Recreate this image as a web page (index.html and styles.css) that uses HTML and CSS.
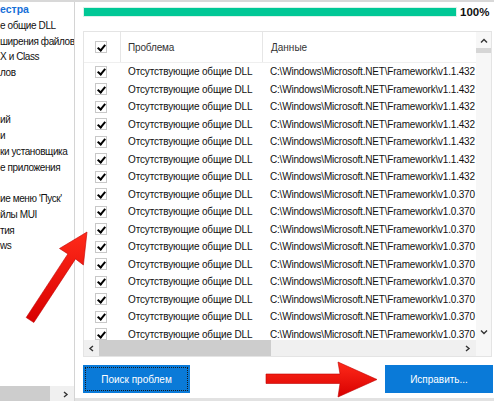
FILE: index.html
```html
<!DOCTYPE html>
<html>
<head>
<meta charset="utf-8">
<link rel="stylesheet" href="styles.css">
</head>
<body>
<div class="app">
  <aside class="side">
    <ul class="side-list">
      <li class="active">естра</li>
      <li>е общие DLL</li>
      <li>ширения файлов</li>
      <li>Х и Class</li>
      <li>лов</li>
      <li>&nbsp;</li>
      <li>&nbsp;</li>
      <li>ий</li>
      <li>и</li>
      <li>ки установщика</li>
      <li>е приложения</li>
      <li>&nbsp;</li>
      <li>ие меню 'Пуск'</li>
      <li>йлы MUI</li>
      <li>тия</li>
      <li>ws</li>
    </ul>
    <div class="side-hscroll">
      <div class="hthumb side-thumb"></div>
      <span class="arrow-cell side-right">
        <svg width="7" height="7" viewBox="0 0 7 7"><path d="M2 1 L5 3.5 L2 6" fill="none" stroke="#333" stroke-width="1.4"/></svg>
      </span>
    </div>
  </aside>

  <main class="main">
    <div class="progress-row">
      <div class="progress"><div class="progress-fill"></div></div>
      <span class="pct">100%</span>
    </div>

    <div class="grid-box">
      <div class="grid-content">
        <div class="grid-head">
          <div class="c-check"><span class="cb"></span></div>
          <div class="c-prob sep">Проблема</div>
          <div class="c-data sep">Данные</div>
        </div>
        <div class="grid-rows" id="rows"></div>
        <div class="hscroll">
          <span class="arrow-cell">
            <svg width="7" height="7" viewBox="0 0 7 7"><path d="M5 1 L2 3.5 L5 6" fill="none" stroke="#333" stroke-width="1.4"/></svg>
          </span>
          <div class="hthumb main-thumb"></div>
          <span class="spacer"></span>
          <span class="arrow-cell">
            <svg width="7" height="7" viewBox="0 0 7 7"><path d="M2 1 L5 3.5 L2 6" fill="none" stroke="#333" stroke-width="1.4"/></svg>
          </span>
        </div>
      </div>
      <div class="vscroll">
        <span class="varrow">
          <svg width="8" height="6" viewBox="0 0 8 6"><path d="M1 4.5 L4 1.5 L7 4.5" fill="none" stroke="#333" stroke-width="1.4"/></svg>
        </span>
        <div class="vthumb"></div>
        <span class="spacer"></span>
        <span class="varrow down">
          <svg width="8" height="6" viewBox="0 0 8 6"><path d="M1 1.5 L4 4.5 L7 1.5" fill="none" stroke="#333" stroke-width="1.4"/></svg>
        </span>
        <span class="corner"></span>
      </div>
    </div>

    <div class="actions">
      <button class="btn focus"><span>Поиск проблем</span></button>
      <button class="btn">Исправить...</button>
    </div>
  </main>

  <svg class="arrows" width="494" height="401" viewBox="0 0 494 401">
    <defs>
      <linearGradient id="rg" x1="0" y1="0" x2="0" y2="1">
        <stop offset="0" stop-color="#ff2a1a"/>
        <stop offset="1" stop-color="#d80000"/>
      </linearGradient>
    </defs>
    <polygon points="33.8,322.5 75.5,258.9 83.4,265 87,232 59.5,248.5 67.9,253.9 26.2,317.5" fill="url(#rg)" stroke="#c00000" stroke-width="0.6"/>
    <polygon points="266,374 340,374 338,362 377,379.5 338,397 340,383.5 266,383.5" fill="url(#rg)" stroke="#c00000" stroke-width="0.6"/>
  </svg>
</div>
<script>
  var rows = document.getElementById('rows');
  var html = '';
  for (var i = 0; i < 16; i++) {
    var v = i < 7 ? 'v1.1.432' : 'v1.0.370';
    html += '<div class="row"><div class="c-check"><span class="cb"></span></div>' +
      '<div class="c-prob">Отсутствующие общие DLL</div>' +
      '<div class="c-data">C:\\Windows\\Microsoft.NET\\Framework\\' + v + '</div></div>';
  }
  rows.innerHTML = html;
</script>
</body>
</html>
```

FILE: styles.css
```css
* { box-sizing: border-box; }
html, body { margin: 0; padding: 0; }
body {
  width: 494px;
  height: 401px;
  overflow: hidden;
  background: #fff;
  font-family: "Liberation Sans", "DejaVu Sans", sans-serif;
  font-size: 10px;
  color: #111;
}
.app {
  position: relative;
  display: flex;
  width: 494px;
  height: 401px;
  border-top: 2px solid #d8d8d8;
}
.side {
  width: 75px;
  flex: none;
  border-right: 1px solid #d4d4d4;
  display: flex;
  flex-direction: column;
  overflow: hidden;
}
.side-list {
  list-style: none;
  margin: 0;
  padding: 0;
  flex: 1;
}
.side-list li {
  height: 15.75px;
  line-height: 15.75px;
  white-space: nowrap;
  overflow: hidden;
  font-size: 10px;
  letter-spacing: -0.4px;
}
.side-list li.active {
  color: #1670d8;
  font-weight: bold;
  font-size: 10.5px;
  letter-spacing: 0;
}
.side-hscroll {
  height: 16px;
  margin-bottom: -1px;
  background: #f0f0f0;
  display: flex;
  align-items: center;
}
.side-thumb { width: 50px; height: 16px; }
.side-right { margin-left: 8px; }
.hthumb { background: #cdcdcd; }
.arrow-cell {
  width: 14px;
  height: 16px;
  display: flex;
  align-items: center;
  justify-content: center;
}
.spacer { flex: 1; }

.main {
  flex: 1;
  display: flex;
  flex-direction: column;
  padding: 5px 1px 0 8px;
  border-bottom: 3px solid #e2e2e2;
}
.progress-row {
  display: flex;
  align-items: center;
  height: 10px;
}
.progress {
  width: 374px;
  height: 10px;
  background: #e6e6e6;
  border: 1px solid #d9f3ea;
}
.progress-fill {
  width: 100%;
  height: 100%;
  background: #00c896;
}
.pct {
  margin-left: 3px;
  font-weight: bold;
  font-size: 11.5px;
  color: #111;
}

.grid-box {
  margin-top: 14px;
  width: 409px;
  height: 326px;
  border: 1px solid #e4e4e4;
  display: flex;
}
.grid-content {
  width: 393px;
  display: flex;
  flex-direction: column;
  overflow: hidden;
}
.grid-head {
  height: 31px;
  flex: none;
  display: flex;
  align-items: stretch;
  border-bottom: 1px solid #efefef;
  color: #333;
}
.grid-head > div {
  display: flex;
  align-items: center;
}
.grid-head .sep { border-left: 1px solid #e6e6e6; }
.c-check {
  width: 36px;
  flex: none;
  display: flex;
  align-items: center;
  padding-left: 11px;
}
.c-prob {
  width: 142px;
  flex: none;
  padding-left: 8px;
  white-space: nowrap;
  letter-spacing: -0.15px;
}
.c-data {
  flex: none;
  padding-left: 8px;
  white-space: nowrap;
  letter-spacing: -0.2px;
}
.grid-head .c-prob { padding-left: 7px; }
.grid-head .c-data { padding-left: 8px; flex: 1; letter-spacing: 0; }
.grid-rows {
  flex: 1;
  overflow: hidden;
}
.row {
  height: 17.5px;
  display: flex;
  align-items: center;
}
.cb {
  width: 12px;
  height: 12px;
  border: 1px solid #c8c8c8;
  background: #fff;
  position: relative;
  display: inline-block;
}
.cb::after {
  content: "";
  position: absolute;
  left: 2.5px;
  top: 0.5px;
  width: 3px;
  height: 6px;
  border: solid #000;
  border-width: 0 2px 2px 0;
  transform: rotate(40deg);
}
.hscroll {
  height: 16px;
  flex: none;
  background: #f0f0f0;
  display: flex;
  align-items: center;
  padding-right: 2px;
}
.main-thumb {
  width: 172px;
  height: 16px;
  margin-left: 1px;
}
.vscroll {
  width: 15px;
  display: flex;
  flex-direction: column;
  background: #f7f7f7;
}
.varrow {
  height: 15px;
  display: flex;
  align-items: center;
  justify-content: center;
  margin-top: 1px;
}
.varrow.down { margin-top: 0; }
.vthumb {
  height: 5px;
  background: #d6d6d6;
}
.corner { height: 17px; }

.actions {
  margin-top: 8px;
  display: flex;
  justify-content: space-between;
}
.btn {
  height: 28px;
  border: none;
  background: #0a7ad8;
  color: #fff;
  font-family: "Liberation Sans", "DejaVu Sans", sans-serif;
  font-size: 10px;
  padding: 0;
  width: 108px;
}
.btn.focus {
  width: 107px;
  padding: 2px;
}
.btn.focus span {
  display: flex;
  align-items: center;
  justify-content: center;
  height: 100%;
  border: 1px dotted #1a1a1a;
}
.arrows {
  position: absolute;
  left: 0;
  top: -2px;
  pointer-events: none;
}
```
